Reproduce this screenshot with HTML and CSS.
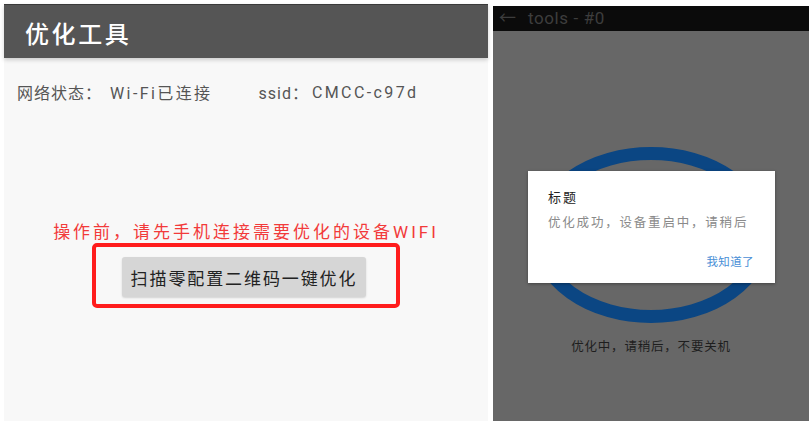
FILE: index.html
```html
<!DOCTYPE html>
<html lang="zh-CN">
<head>
<meta charset="utf-8">
<title>优化工具</title>
<link rel="stylesheet" href="styles.css">
</head>
<body>
<div class="shot">
  <section class="app">
    <header class="app-bar"><h1 class="app-title">优化工具</h1></header>
    <div class="status">
      <span class="lbl">网络状态：</span><span class="val wifi">Wi-Fi已连接</span>
      <span class="lbl ssid">ssid：</span><span class="val">CMCC-c97d</span>
    </div>
    <p class="hint">操作前，请先手机连接需要优化的设备WIFI</p>
    <div class="mark"><button class="scan">扫描零配置二维码一键优化</button></div>
  </section>
  <section class="phone">
    <div class="topbar"><span class="back">←</span><span class="ttl">tools - #0</span></div>
    <div class="screen">
      <svg class="ring" width="240" height="176" viewBox="0 0 240 176">
        <ellipse cx="120" cy="88" rx="113.5" ry="81.5" fill="none" stroke="#0b4683" stroke-width="13"/>
      </svg>
      <p class="progress">优化中，请稍后，不要关机</p>
      <div class="dialog">
        <div class="dlg-title">标题</div>
        <div class="dlg-msg">优化成功，设备重启中，请稍后</div>
        <div class="dlg-actions"><span class="dlg-btn">我知道了</span></div>
      </div>
    </div>
  </section>
</div>
</body>
</html>
```
FILE: styles.css
```css
* { box-sizing: border-box; }
html, body { margin: 0; padding: 0; background: #ffffff; }
body {
  width: 811px;
  height: 421px;
  overflow: hidden;
  font-family: Roboto, "Noto Sans CJK SC", sans-serif;
}
.shot {
  display: flex;
  align-items: flex-start;
  height: 421px;
}

/* left app */
.app {
  margin-left: 4px;
  margin-top: 4px;
  width: 484px;
  height: 417px;
  background: #f8f8f8;
  display: flex;
  flex-direction: column;
  align-items: center;
}
.app-bar {
  align-self: stretch;
  height: 54px;
  background: #555555;
  border-top: 1px solid #3a3a3a;
  box-shadow: 0 2px 4px rgba(0,0,0,0.18);
  display: flex;
  align-items: center;
  padding-left: 21px;
}
.app-title {
  margin: 0;
  color: #ffffff;
  font-family: "Noto Sans CJK SC", sans-serif;
  font-weight: 500;
  font-size: 24px;
  letter-spacing: 2.6px;
  line-height: 1;
  padding-top: 2px;
}
.status {
  align-self: stretch;
  display: flex;
  align-items: center;
  margin-top: 23px;
  padding-left: 13px;
  height: 22px;
  font-size: 16px;
  color: #555555;
  white-space: nowrap;
}
.lbl { letter-spacing: 1px; }
.val { letter-spacing: 2.4px; }
.wifi { margin-left: 8px; margin-right: 46px; }
.ssid { margin-right: 3px; }
.hint {
  margin: 117px 0 0;
  height: 24px;
  line-height: 24px;
  font-size: 17px;
  letter-spacing: 3px;
  color: #f23a3a;
  white-space: nowrap;
}
.mark {
  margin-top: -1px;
  width: 308px;
  height: 65px;
  border: 4px solid #ff1c1c;
  border-radius: 5px;
  padding: 10px 26px 0 26px;
}
.scan {
  display: block;
  width: 244px;
  height: 40px;
  margin: 0;
  border: 0;
  border-radius: 3px;
  background: #d6d6d6;
  box-shadow: 0 1px 2px rgba(0,0,0,0.15);
  font-family: "Noto Sans CJK SC", sans-serif;
  font-size: 17px;
  letter-spacing: 1.9px;
  color: #222222;
  padding: 0;
  text-align: center;
}

/* right phone */
.phone {
  margin-left: 5px;
  margin-top: 6px;
  width: 316px;
  height: 415px;
  background: #676767;
  display: flex;
  flex-direction: column;
}
.topbar {
  height: 25px;
  background: #0b0b0b;
  display: flex;
  align-items: center;
  padding-left: 6px;
  color: #3d3d3d;
}
.back {
  font-size: 17px;
  width: 29px;
  line-height: 1;
}
.ttl {
  font-size: 17px;
  letter-spacing: 0.6px;
  line-height: 1;
}
.screen {
  position: relative;
  flex: 1;
  display: flex;
  flex-direction: column;
  align-items: center;
  padding-top: 116px;
}
.ring { display: block; }
.progress {
  margin: 15px 0 0;
  font-family: "Noto Sans CJK SC", sans-serif;
  font-size: 12.5px;
  letter-spacing: 0.8px;
  line-height: 16px;
  color: #1e1e1e;
}
.dialog {
  position: absolute;
  left: 35px;
  top: 140px;
  width: 247px;
  height: 112px;
  background: #ffffff;
  box-shadow: 0 1px 3px rgba(0,0,0,0.35);
  padding: 18px 0 0 20px;
  font-family: "Noto Sans CJK SC", sans-serif;
}
.dlg-title {
  font-size: 13px;
  letter-spacing: 2px;
  line-height: 16px;
  color: #222222;
}
.dlg-msg {
  margin-top: 9px;
  font-size: 12.5px;
  letter-spacing: 1.8px;
  line-height: 16px;
  color: #8a8a8a;
  white-space: nowrap;
}
.dlg-actions {
  display: flex;
  justify-content: flex-end;
  padding-right: 21px;
  margin-top: 24px;
}
.dlg-btn {
  font-size: 11.5px;
  letter-spacing: 0.4px;
  line-height: 14px;
  color: #4a8fd6;
}
```
